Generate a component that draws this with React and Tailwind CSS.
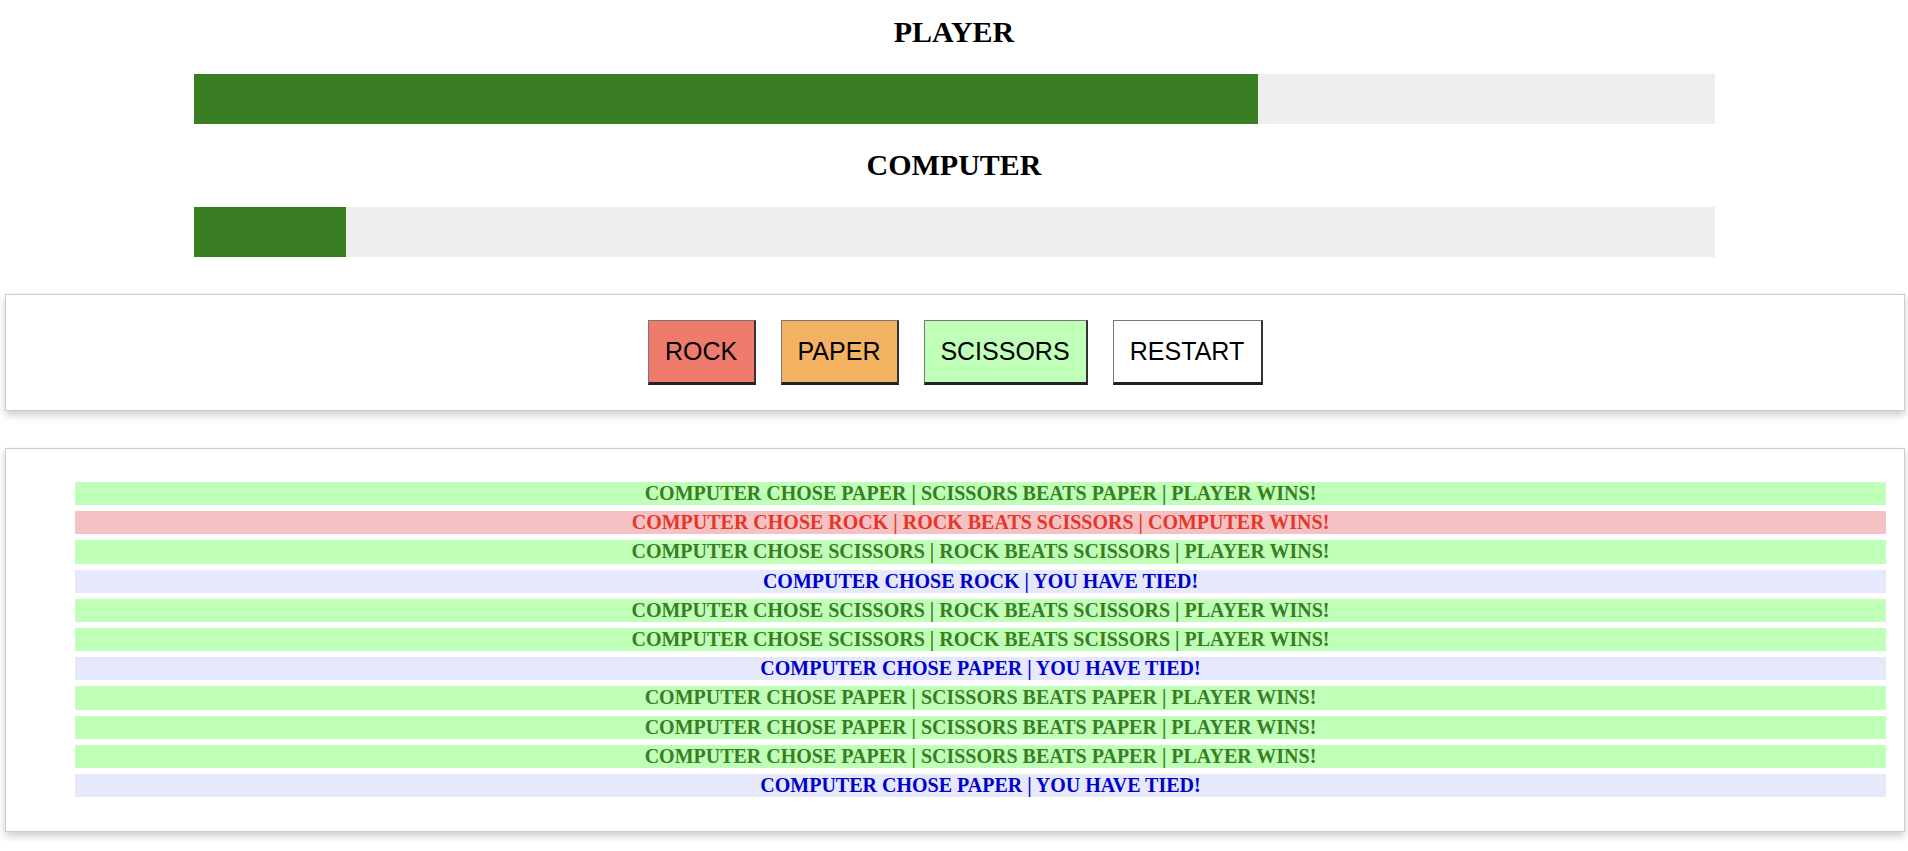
import React, { useState } from "react";

const START_LOG = [
  { choice: "PAPER", result: "win" },
  { choice: "ROCK", result: "lose" },
  { choice: "SCISSORS", result: "win" },
  { choice: "ROCK", result: "tie" },
  { choice: "SCISSORS", result: "win" },
  { choice: "SCISSORS", result: "win" },
  { choice: "PAPER", result: "tie" },
  { choice: "PAPER", result: "win" },
  { choice: "PAPER", result: "win" },
  { choice: "PAPER", result: "win" },
  { choice: "PAPER", result: "tie" },
];

const BEATS = { ROCK: "SCISSORS", PAPER: "ROCK", SCISSORS: "PAPER" };
const LOSES_TO = { ROCK: "PAPER", PAPER: "SCISSORS", SCISSORS: "ROCK" };

function message(entry) {
  const c = entry.choice;
  if (entry.result === "tie") return `COMPUTER CHOSE ${c} | YOU HAVE TIED!`;
  if (entry.result === "win") return `COMPUTER CHOSE ${c} | ${LOSES_TO[c]} BEATS ${c} | PLAYER WINS!`;
  return `COMPUTER CHOSE ${c} | ${c} BEATS ${BEATS[c]} | COMPUTER WINS!`;
}

const rowStyle = {
  win: "bg-[#bfffb8] text-[#397e22]",
  lose: "bg-[#f4c2c2] text-[#e8352a]",
  tie: "bg-[#e6e8fb] text-[#0000cd]",
};

function ScoreBar({ label, pct, first }) {
  return (
    <div>
      <h2 className={`${first ? "mt-[16px]" : "mt-[25px]"} text-center text-[30px] leading-[32px] font-bold text-black`}>
        {label}
      </h2>
      <div className="mx-auto mt-[26px] w-[1521px] h-[50px] bg-[#eeeeee]">
        <div className="h-full bg-[#397e22]" style={{ width: `${pct}%` }} />
      </div>
    </div>
  );
}

export default function App() {
  const [log] = useState(START_LOG);
  const [player] = useState(70);
  const [computer] = useState(10);

  const btn =
    "h-[65px] px-[12px] text-[25px] text-black border-t border-l border-t-[#777] border-l-[#777] border-r-2 border-r-[#333] border-b-[3px] border-b-[#222] font-['Liberation_Sans',Arial,sans-serif]";

  return (
    <div className="min-h-screen bg-white font-['Liberation_Serif','Times_New_Roman',serif] pb-[20px]">
      <ScoreBar label="PLAYER" pct={player} first />
      <ScoreBar label="COMPUTER" pct={computer} />

      <div className="mt-[37px] ml-[5px] mr-[3px] border border-[#cccccc] bg-white shadow-[0_4px_8px_rgba(0,0,0,0.2)] py-[25px] flex justify-center gap-[25px]">
        <button className={`${btn} w-[108px] bg-[#ef7b6d]`}>ROCK</button>
        <button className={`${btn} w-[118px] bg-[#f2b262]`}>PAPER</button>
        <button className={`${btn} w-[164px] bg-[#bfffb8]`}>SCISSORS</button>
        <button className={`${btn} w-[150px] bg-white`}>RESTART</button>
      </div>

      <div className="mt-[37px] ml-[5px] mr-[3px] border border-[#cccccc] bg-white shadow-[0_4px_8px_rgba(0,0,0,0.2)] pt-[33px] pb-[34px] pl-[69px] pr-[18px]">
        <ul className="flex flex-col gap-[6px]">
          {log.map((entry, i) => (
            <li
              key={i}
              className={`h-[23.2px] leading-[23px] text-center text-[20px] font-bold ${rowStyle[entry.result]}`}
            >
              {message(entry)}
            </li>
          ))}
        </ul>
      </div>
    </div>
  );
}
